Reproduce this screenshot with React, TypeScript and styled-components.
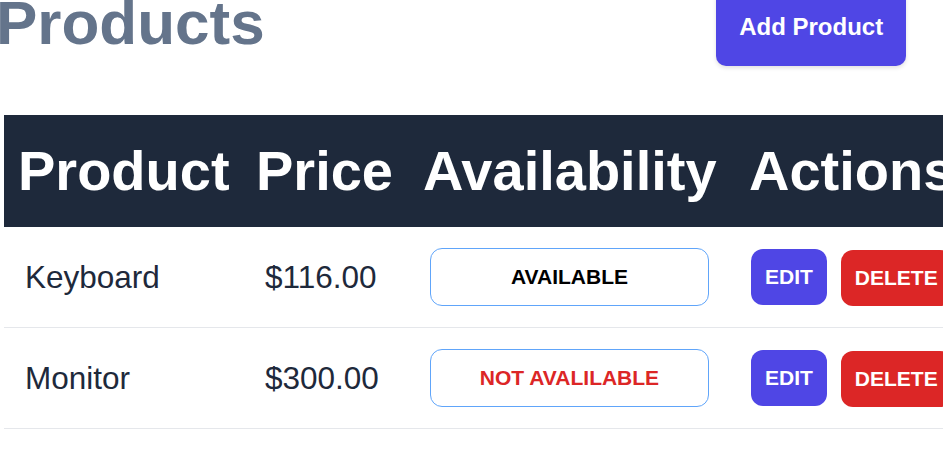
import React from "react";
import styled, { createGlobalStyle } from "styled-components";

const GlobalStyle = createGlobalStyle`
  html, body {
    margin: 0;
    padding: 0;
    background: #ffffff;
    overflow: hidden;
  }
  body {
    font-family: "Liberation Sans", Arial, sans-serif;
  }
  * { box-sizing: border-box; }
`;

const Page = styled.div`
  width: 1000px;
  padding: 0 0 0 4px;
`;

const TopBar = styled.div`
  display: flex;
  align-items: flex-start;
  justify-content: space-between;
  width: 910px;
  margin-top: -11px;
  margin-left: -8px;
`;

const Title = styled.h1`
  margin: 3px 0 0 0;
  font-size: 62px;
  line-height: 62px;
  font-weight: 700;
  color: #64748b;
`;

const AddButton = styled.button`
  font-family: inherit;
  font-size: 24px;
  line-height: 32px;
  font-weight: 700;
  color: #ffffff;
  background: #4f46e5;
  border: none;
  border-radius: 10px;
  padding: 22.4px 22.8px;
  box-shadow: 0 2px 4px rgba(0, 0, 0, 0.12);
  cursor: pointer;
`;

const Table = styled.table`
  margin-top: 49px;
  border-collapse: collapse;
  table-layout: fixed;
  width: 994px;
`;

const HeadRow = styled.tr`
  background: #1e293b;
`;

const Th = styled.th<{ $pl?: number }>`
  padding: 24px 12px 24px ${(p) => p.$pl ?? 12}px;
  font-size: 56px;
  line-height: 64px;
  font-weight: 700;
  color: #ffffff;
  text-align: left;
  white-space: nowrap;
  overflow: hidden;
`;

const Row = styled.tr`
  border-bottom: 1px solid #e5e7eb;
`;

const Td = styled.td<{ $pl?: number }>`
  padding: 21px 0 21px ${(p) => p.$pl ?? 21}px;
  font-size: 31.5px;
  line-height: 36px;
  color: #1e293b;
  vertical-align: middle;
  white-space: nowrap;
`;

const Badge = styled.div<{ $available: boolean }>`
  width: 279px;
  height: 58px;
  border: 1px solid #60a5fa;
  border-radius: 12px;
  display: flex;
  align-items: center;
  justify-content: center;
  font-size: 21px;
  font-weight: 700;
  text-transform: uppercase;
  color: ${(p) => (p.$available ? "#000000" : "#dc2626")};
`;

const Actions = styled.div`
  display: flex;
  gap: 14px;
  align-items: center;
`;

const ActionButton = styled.button<{ $variant: "edit" | "delete" }>`
  font-family: inherit;
  height: 56px;
  padding: 0 14px;
  border: none;
  border-radius: 12px;
  font-size: 21px;
  font-weight: 700;
  color: #ffffff;
  background: ${(p) => (p.$variant === "edit" ? "#4f46e5" : "#dc2626")};
  margin-top: ${(p) => (p.$variant === "edit" ? "0" : "2px")};
  text-transform: uppercase;
  cursor: pointer;
`;

const products = [
  { name: "Keyboard", price: 116, available: true },
  { name: "Monitor", price: 300, available: false },
];

export default function App() {
  return (
    <>
      <GlobalStyle />
      <Page>
        <TopBar>
          <Title>Products</Title>
          <AddButton>Add Product</AddButton>
        </TopBar>
        <Table>
          <colgroup>
            <col style={{ width: 240 }} />
            <col style={{ width: 168 }} />
            <col style={{ width: 326 }} />
            <col style={{ width: 260 }} />
          </colgroup>
          <thead>
            <HeadRow>
              <Th $pl={14}>Product</Th>
              <Th>Price</Th>
              <Th $pl={11}>Availability</Th>
              <Th $pl={11}>Actions</Th>
            </HeadRow>
          </thead>
          <tbody>
            {products.map((p) => (
              <Row key={p.name}>
                <Td>{p.name}</Td>
                <Td>${p.price.toFixed(2)}</Td>
                <Td $pl={18}>
                  <Badge $available={p.available}>
                    {p.available ? "Available" : "Not Avalilable"}
                  </Badge>
                </Td>
                <Td $pl={13}>
                  <Actions>
                    <ActionButton $variant="edit">Edit</ActionButton>
                    <ActionButton $variant="delete">Delete</ActionButton>
                  </Actions>
                </Td>
              </Row>
            ))}
          </tbody>
        </Table>
      </Page>
    </>
  );
}
